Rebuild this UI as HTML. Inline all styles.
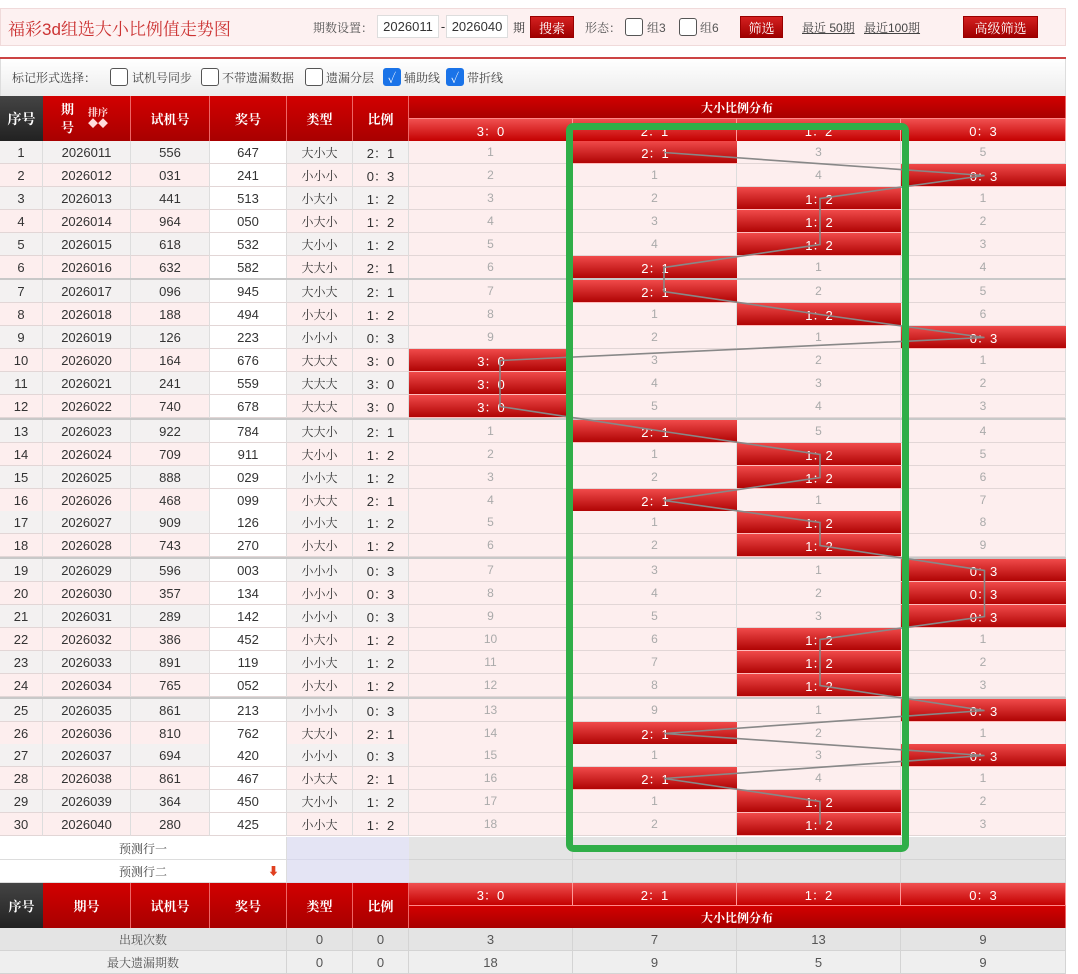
<!DOCTYPE html>
<html><head><meta charset="utf-8"><style>
*{margin:0;padding:0;box-sizing:border-box}
body{width:1078px;height:966px;overflow:hidden;background:#fff;font-family:"Liberation Sans","Noto Serif CJK SC",serif;position:relative;color:#333}
.a{position:absolute;display:flex;align-items:center;justify-content:center;font-size:13px;white-space:nowrap}
.cb{position:absolute;width:18px;height:18px;border:1px solid #555;border-radius:3px;background:#fff}
.cb.on{background:#1a73e8;border-color:#1a73e8;color:#fff;font-size:13px;display:flex;align-items:center;justify-content:center}
.btn{position:absolute;background:linear-gradient(#d42020,#a00000);color:#fff;font-size:13px;display:flex;align-items:center;justify-content:center;border:1px solid #900}
.hd{background:linear-gradient(#d20000,#a80000);color:#fff;font-weight:bold;border-right:1px solid #e66}
.hk{background:linear-gradient(#444,#222);color:#fff;font-weight:bold}
.sub{background:linear-gradient(#f05050,#c40000);color:#fff}
.hit{background:linear-gradient(#f04a4a,#b00404);color:#fff}
</style></head><body>
<div style="position:absolute;left:0;top:8px;width:1066px;height:38px;background:#fdf1f1;border:1px solid #f0dada"></div>
<div class="a" style="left:8px;top:14px;height:26px;font-size:17px;color:#c33">福彩3d组选大小比例值走势图</div>
<div class="a" style="left:313px;top:16px;height:22px;font-size:12px;color:#555">期数设置：</div>
<div class="a" style="left:377px;top:15px;width:62px;height:23px;background:#fff;border:1px solid #ddd;font-size:13px">2026011</div>
<div class="a" style="left:440px;top:15px;width:6px;height:23px">-</div>
<div class="a" style="left:446px;top:15px;width:62px;height:23px;background:#fff;border:1px solid #ddd;font-size:13px">2026040</div>
<div class="a" style="left:513px;top:16px;height:22px;font-size:12px">期</div>
<div class="btn" style="left:530px;top:16px;width:44px;height:22px">搜索</div>
<div class="a" style="left:585px;top:16px;height:22px;font-size:12px;color:#555">形态：</div>
<div class="cb" style="left:625px;top:18px"></div><div class="a" style="left:647px;top:16px;height:22px;font-size:12px;color:#555">组3</div>
<div class="cb" style="left:679px;top:18px"></div><div class="a" style="left:700px;top:16px;height:22px;font-size:12px;color:#555">组6</div>
<div class="btn" style="left:740px;top:16px;width:43px;height:22px">筛选</div>
<div class="a" style="left:802px;top:16px;height:22px;font-size:12px;color:#444;text-decoration:underline">最近 50期</div>
<div class="a" style="left:864px;top:16px;height:22px;font-size:12px;color:#444;text-decoration:underline">最近100期</div>
<div class="btn" style="left:963px;top:16px;width:75px;height:22px">高级筛选</div>
<div style="position:absolute;left:0;top:57px;width:1066px;height:2px;background:#c44"></div>
<div style="position:absolute;left:0;top:59px;width:1066px;height:37px;background:linear-gradient(#fff,#ececec);border-left:1px solid #ddd;border-right:1px solid #ddd"></div>
<div class="a" style="left:12px;top:66px;height:22px;font-size:12px;color:#444">标记形式选择：</div>
<div class="cb" style="left:110px;top:68px"></div><div class="a" style="left:132px;top:66px;height:22px;font-size:12px;color:#444">试机号同步</div>
<div class="cb" style="left:201px;top:68px"></div><div class="a" style="left:222px;top:66px;height:22px;font-size:12px;color:#444">不带遗漏数据</div>
<div class="cb" style="left:305px;top:68px"></div><div class="a" style="left:326px;top:66px;height:22px;font-size:12px;color:#444">遗漏分层</div>
<div class="cb on" style="left:383px;top:68px">✓</div><div class="a" style="left:404px;top:66px;height:22px;font-size:12px;color:#444">辅助线</div>
<div class="cb on" style="left:446px;top:68px">✓</div><div class="a" style="left:467px;top:66px;height:22px;font-size:12px;color:#444">带折线</div>
<div id="t"></div>
<script>
var X=[0,43,131,210,287,353,409,573,737,901,1066];
var R=["2:1","0:3","1:2","1:2","1:2","2:1","2:1","1:2","0:3","3:0","3:0","3:0","2:1","1:2","1:2","2:1","1:2","1:2","0:3","0:3","0:3","1:2","1:2","1:2","0:3","2:1","0:3","2:1","1:2","1:2"];
var D="556 647 大小大,031 241 小小小,441 513 小大小,964 050 小大小,618 532 大小小,632 582 大大小,096 945 大小大,188 494 小大小,126 223 小小小,164 676 大大大,241 559 大大大,740 678 大大大,922 784 大大小,709 911 大小小,888 029 小小大,468 099 小大大,909 126 小小大,743 270 小大小,596 003 小小小,357 134 小小小,289 142 小小小,386 452 小大小,891 119 小小大,765 052 小大小,861 213 小小小,810 762 大大小,694 420 小小小,861 467 小大大,364 450 大小小,280 425 小小大".split(",");
var keys=["3:0","2:1","1:2","0:3"];
function rt(s){return s.replace(":","：");}
var h="";
function c(x1,x2,y,hh,cls,st,txt){h+='<div class="a '+cls+'" style="left:'+x1+'px;top:'+y+'px;width:'+(x2-x1)+'px;height:'+hh+'px;'+st+'">'+txt+'</div>';}
c(0,43,96,45,"hk","font-size:14px","序号");
c(43,131,96,45,"hd","font-size:13px;justify-content:flex-start;padding-left:18px","<span style='line-height:18px;text-align:center'>期<br>号</span><span style='margin-left:14px;font-size:10px;line-height:11px;text-align:center;color:#fdd'>排序<br>◆◆</span>");
var hn=["试机号","奖号","类型","比例"];
for(var i=0;i<4;i++)c(X[i+2],X[i+3],96,45,"hd","font-size:13px",hn[i]);
c(409,1066,96,22,"hd","font-size:12px","大小比例分布");
for(var k=0;k<4;k++)c(X[6+k],X[7+k],118,23,"sub","border-right:1px solid #f99;border-top:1px solid #f88",rt(keys[k]));
var miss=[0,0,2,4],pts=[];
for(var r=0;r<30;r++){
 var y=141+r*22.9+Math.floor(r/6)*2,yy=Math.round(y),hh=23;
 if(r%6==0&&r>0)h+='<div style="position:absolute;left:0;top:'+(yy-2)+'px;width:1066px;height:2px;background:#c8c8c8"></div>';
 var bg=(r%2==0)?"#f3f1f1":"#fdeeee",bd="border-right:1px solid #ddd;border-bottom:1px solid #e2d6d6;";
 var d=D[r].split(" ");
 c(0,43,yy,hh,"",bd+"background:"+bg,r+1);
 c(43,131,yy,hh,"",bd+"background:"+bg,2026011+r);
 c(131,210,yy,hh,"",bd+"background:"+bg,d[0]);
 c(210,287,yy,hh,"",bd+"background:#fff",d[1]);
 c(287,353,yy,hh,"",bd+"background:"+bg+";font-size:12px",d[2]);
 c(353,409,yy,hh,"",bd+"background:"+bg,rt(R[r]));
 for(var k=0;k<4;k++){
  if(keys[k]==R[r]){miss[k]=0;c(X[6+k],X[7+k],yy,hh,"hit","border-bottom:1px solid #fbb",rt(keys[k]));pts.push([(X[6+k]+X[7+k])/2+(k<2?9:1),yy+11.5]);}
  else{miss[k]++;c(X[6+k],X[7+k],yy,hh,"",bd+"background:#fdeeee;color:#aaa;font-size:12px",miss[k]);}
 }
}
var s='<svg style="position:absolute;left:0;top:0" width="1078" height="966"><polyline fill="none" stroke="#888" stroke-width="1.6" points="'+pts.map(p=>p.join(",")).join(" ")+'"/><rect x="569.5" y="126.5" width="336" height="722" rx="4" fill="none" stroke="#2fae48" stroke-width="7"/></svg>';
var py=[837,860];var pl=["预测行一","预测行二"];
for(var i=0;i<2;i++){
 c(0,287,py[i],23,"","background:#fff;border-bottom:1px solid #ddd;border-right:1px solid #ddd;font-size:12px;color:#444",pl[i]+(i==1?"<span style='position:absolute;left:268px;color:#e04020;font-size:11px'>⬇</span>":""));
 c(287,409,py[i],23,"","background:#e4e4f4;border-bottom:1px solid #d8d8ea","");
 for(var k=0;k<4;k++)c(X[6+k],X[7+k],py[i],23,"","background:#e4e4e4;border-right:1px solid #d4d4d4;border-bottom:1px solid #d4d4d4","");
}
c(0,43,883,45,"hk","font-size:13px","序号");
var bn=["期号","试机号","奖号","类型","比例"];
for(var i=0;i<5;i++)c(X[i+1],X[i+2],883,45,"hd","font-size:13px",bn[i]);
for(var k=0;k<4;k++)c(X[6+k],X[7+k],883,22,"sub","border-right:1px solid #f99",rt(keys[k]));
c(409,1066,905,23,"hd","font-size:12px;border-top:1px solid #f88","大小比例分布");
var S=[["出现次数",0,0,3,7,13,9,"#e4e4e4"],["最大遗漏期数",0,0,18,9,5,9,"#efefef"]];
for(var i=0;i<2;i++){var y=928+i*23,b="background:"+S[i][7]+";border-right:1px solid #d4d4d4;border-bottom:1px solid #d4d4d4;color:#555;";
 c(0,287,y,23,"",b+"font-size:12px",S[i][0]);c(287,353,y,23,"",b,S[i][1]);c(353,409,y,23,"",b,S[i][2]);
 for(var k=0;k<4;k++)c(X[6+k],X[7+k],y,23,"",b,S[i][3+k]);}
document.getElementById("t").innerHTML=h+s;
</script>
</body></html>
